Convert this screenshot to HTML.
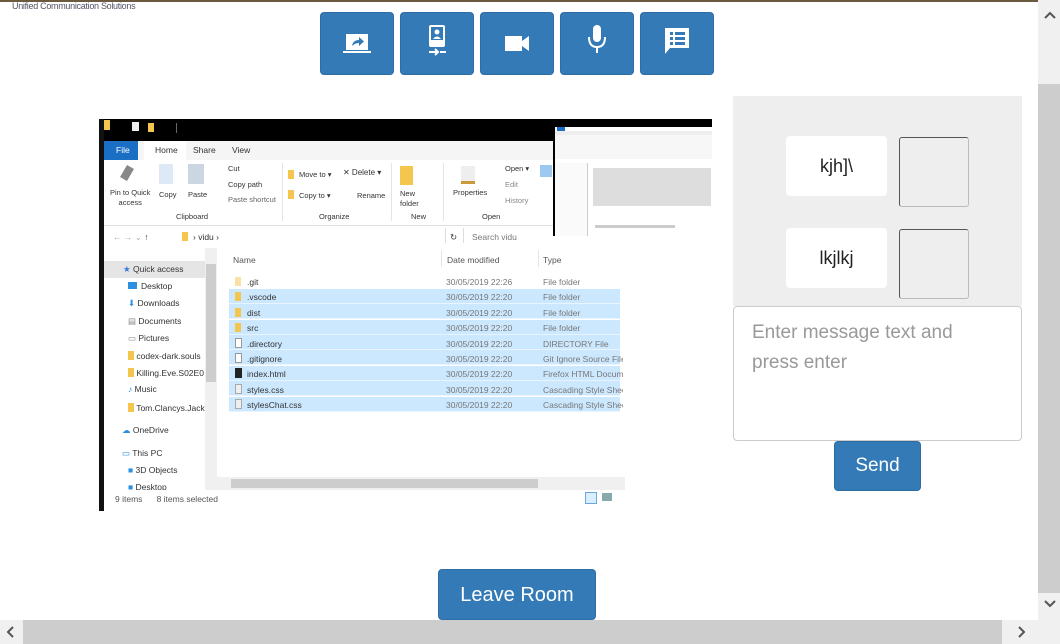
<!DOCTYPE html>
<html><head><meta charset="utf-8"><style>
*{box-sizing:border-box;margin:0;padding:0}
body{width:1060px;height:644px;overflow:hidden;background:#fff;font-family:"Liberation Sans",sans-serif;position:relative}
.a{position:absolute}
.btn{position:absolute;top:12px;width:74px;height:63px;background:#337ab7;border:1px solid #2e6da4;border-radius:4px}
.btn svg{position:absolute;left:22px;top:16px}
.t{position:absolute;font-size:8.5px;color:#333;white-space:nowrap;font-family:"Liberation Sans",sans-serif}
.row{position:absolute;left:229px;width:391px;height:15px;background:#cce8ff;border-bottom:1px solid #e8f4ff}
.fol{position:absolute;width:6px;height:9px;background:#f5c64e}
</style></head><body>
<div class="a" style="left:0;top:0;width:1038px;height:2px;background:#6b5a40"></div>
<div class="a" style="left:12px;top:1px;font-size:9px;color:#556;letter-spacing:-0.3px">Unified Communication Solutions</div>

<div class="btn" style="left:320px"><svg width="30" height="30" viewBox="0 0 30 30"><rect x="3" y="5" width="22" height="16" fill="#fff"/><rect x="0" y="22" width="28" height="2" fill="#fff"/><path d="M9 17 Q10 11 16 11 V8 L21 12.5 16 17 V14 Q12 14 9 17Z" fill="#337ab7"/></svg></div>
<div class="btn" style="left:400px"><svg width="30" height="34" viewBox="0 0 30 34" style="top:10px"><rect x="6" y="2" width="16" height="22" rx="2" fill="#fff"/><rect x="8" y="4" width="12" height="13" fill="#337ab7"/><circle cx="14" cy="9" r="2.5" fill="#fff"/><path d="M10 16 Q14 11 18 16Z" fill="#fff"/><path d="M6 29 H15 M12 26 L15 29 12 32 M17 29 H23" stroke="#fff" stroke-width="2" fill="none"/></svg></div>
<div class="btn" style="left:480px"><svg width="30" height="30" viewBox="0 0 30 30"><rect x="2" y="7" width="17" height="15" fill="#fff"/><path d="M19 12 L26 7 V22 L19 17Z" fill="#fff"/></svg></div>
<div class="btn" style="left:560px"><svg width="30" height="34" viewBox="0 0 30 34" style="top:10px"><rect x="10" y="2" width="8" height="17" rx="4" fill="#fff"/><path d="M6 14 Q6 24 14 24 Q22 24 22 14" stroke="#fff" stroke-width="2" fill="none"/><rect x="13" y="24" width="2" height="6" fill="#fff"/></svg></div>
<div class="btn" style="left:640px"><svg width="30" height="32" viewBox="0 0 30 32" style="top:13px"><path d="M2 2 H26 V22 H7 L2 28Z" fill="#fff"/><rect x="7" y="6" width="3" height="3" fill="#337ab7"/><rect x="12" y="6" width="10" height="3" fill="#337ab7"/><rect x="7" y="11" width="3" height="3" fill="#337ab7"/><rect x="12" y="11" width="10" height="3" fill="#337ab7"/><rect x="7" y="16" width="3" height="3" fill="#337ab7"/><rect x="12" y="16" width="10" height="3" fill="#337ab7"/></svg></div>

<!-- screenshot -->
<div class="a" style="left:99px;top:119px;width:454px;height:117px;background:#000"></div>
<div class="a" style="left:99px;top:119px;width:5px;height:392px;background:#111"></div>
<div class="a" style="left:104px;top:141px;width:449px;height:19px;background:#f5f5f5"></div>
<div class="a" style="left:104px;top:141px;width:34px;height:19px;background:#1a6fc4;color:#fff;font-size:8.5px;padding:4px 0 0 12px">File</div>
<div class="a" style="left:144px;top:141px;width:42px;height:19px;background:#fff"></div>
<div class="t" style="left:155px;top:145px">Home</div><div class="t" style="left:193px;top:145px">Share</div><div class="t" style="left:232px;top:145px">View</div>
<div class="a" style="left:104px;top:160px;width:449px;height:66px;background:#fff;border-bottom:1px solid #e0e0e0"></div>
<div class="a" style="left:104px;top:120px;width:6px;height:10px;background:#f5c64e"></div>
<div class="a" style="left:132px;top:122px;width:7px;height:9px;background:#eee"></div>
<div class="a" style="left:148px;top:123px;width:6px;height:9px;background:#f5c64e"></div>
<div class="a" style="left:176px;top:123px;width:1px;height:10px;background:#666"></div>
<div class="t" style="left:110px;top:188px;line-height:10px;text-align:center;font-size:7.5px">Pin to Quick<br>access</div>
<div class="a" style="left:123px;top:166px;width:8px;height:14px;background:#888;transform:rotate(30deg)"></div>
<div class="a" style="left:159px;top:164px;width:14px;height:20px;background:#dde9f5"></div>
<div class="a" style="left:188px;top:164px;width:16px;height:20px;background:#cbd6e2"></div>
<div class="t" style="left:159px;top:190px;font-size:7.5px">Copy</div><div class="t" style="left:188px;top:190px;font-size:7.5px">Paste</div>
<div class="t" style="left:228px;top:164px;font-size:7.5px">Cut</div><div class="t" style="left:228px;top:180px;font-size:7.5px">Copy path</div><div class="t" style="left:228px;top:195px;font-size:7.5px;color:#666">Paste shortcut</div>
<div class="t" style="left:176px;top:212px;font-size:7.5px">Clipboard</div>
<div class="a" style="left:282px;top:163px;width:1px;height:58px;background:#e4e4e4"></div>
<div class="fol" style="left:288px;top:170px"></div><div class="fol" style="left:288px;top:190px"></div>
<div class="t" style="left:299px;top:170px;font-size:7.5px">Move to ▾</div><div class="t" style="left:299px;top:191px;font-size:7.5px">Copy to ▾</div>
<div class="t" style="left:343px;top:168px;font-size:8px">✕ Delete ▾</div><div class="t" style="left:357px;top:191px;font-size:7.5px">Rename</div>
<div class="t" style="left:319px;top:212px;font-size:7.5px">Organize</div>
<div class="a" style="left:391px;top:163px;width:1px;height:58px;background:#e4e4e4"></div>
<div class="a" style="left:400px;top:166px;width:13px;height:19px;background:#f5c64e"></div>
<div class="t" style="left:400px;top:189px;font-size:7.5px;line-height:10px">New<br>folder</div>
<div class="t" style="left:411px;top:212px;font-size:7.5px">New</div>
<div class="a" style="left:443px;top:163px;width:1px;height:58px;background:#e4e4e4"></div>
<div class="a" style="left:461px;top:166px;width:14px;height:18px;background:#eee;border-bottom:3px solid #c89a3a"></div>
<div class="t" style="left:453px;top:188px;font-size:7.5px">Properties</div>
<div class="t" style="left:505px;top:164px;font-size:7.5px">Open ▾</div><div class="t" style="left:505px;top:180px;font-size:7.5px;color:#888">Edit</div><div class="t" style="left:505px;top:196px;font-size:7.5px;color:#888">History</div>
<div class="t" style="left:482px;top:212px;font-size:7.5px">Open</div>
<div class="a" style="left:540px;top:165px;width:12px;height:12px;background:#9cc9f0"></div>
<!-- address -->
<div class="a" style="left:104px;top:226px;width:521px;height:22px;background:#fff"></div>
<div class="t" style="left:113px;top:232px;color:#aaa">←  →  ⌄  <span style="color:#333">↑</span></div>
<div class="fol" style="left:182px;top:232px"></div>
<div class="t" style="left:193px;top:232px">›  vidu  ›</div>
<div class="a" style="left:445px;top:228px;width:1px;height:15px;background:#ddd"></div>
<div class="t" style="left:450px;top:232px">↻</div>
<div class="a" style="left:463px;top:228px;width:1px;height:15px;background:#ddd"></div>
<div class="t" style="left:472px;top:232px;color:#777">Search vidu</div>
<!-- nav pane -->
<div class="a" style="left:104px;top:248px;width:101px;height:242px;background:#fff"></div>
<div class="a" style="left:104px;top:261px;width:101px;height:17px;background:#e5e5e5"></div>
<div class="a" style="left:205px;top:248px;width:12px;height:242px;background:#f0f0f0"></div>
<div class="a" style="left:206px;top:264px;width:10px;height:118px;background:#cdcdcd"></div>
<div class="t" style="left:123px;top:264px"><span style="color:#3a7bd5">★</span> Quick access</div>
<div class="t" style="left:128px;top:281px"><span style="display:inline-block;width:9px;height:7px;background:#2d8fe0;margin-right:4px"></span>Desktop</div>
<div class="t" style="left:128px;top:298px"><span style="color:#2d8fe0">⬇</span> Downloads</div>
<div class="t" style="left:128px;top:316px"><span style="color:#888">▤</span> Documents</div>
<div class="t" style="left:128px;top:333px"><span style="color:#888">▭</span> Pictures</div>
<div class="t" style="left:128px;top:350px;width:77px;overflow:hidden"><span class="fol" style="position:relative;display:inline-block;top:1px"></span> codex-dark.souls</div>
<div class="t" style="left:128px;top:367px;width:77px;overflow:hidden"><span class="fol" style="position:relative;display:inline-block;top:1px"></span> Killing.Eve.S02E0</div>
<div class="t" style="left:128px;top:384px"><span style="color:#2d8fe0">♪</span> Music</div>
<div class="t" style="left:128px;top:402px;width:77px;overflow:hidden"><span class="fol" style="position:relative;display:inline-block;top:1px"></span> Tom.Clancys.Jack</div>
<div class="t" style="left:122px;top:425px"><span style="color:#2d8fe0">☁</span> OneDrive</div>
<div class="t" style="left:122px;top:448px"><span style="color:#2d8fe0">▭</span> This PC</div>
<div class="t" style="left:128px;top:465px"><span style="color:#2d8fe0">■</span> 3D Objects</div>
<div class="t" style="left:128px;top:482px;height:8px;overflow:hidden"><span style="color:#2d8fe0">■</span> Desktop</div>
<!-- files -->
<div class="a" style="left:217px;top:248px;width:408px;height:242px;background:#fff"></div>
<div class="t" style="left:233px;top:255px;color:#555">Name</div>
<div class="t" style="left:447px;top:255px;color:#555">Date modified</div>
<div class="t" style="left:543px;top:255px;color:#555">Type</div>
<div class="a" style="left:441px;top:250px;width:1px;height:17px;background:#e5e5e5"></div>
<div class="a" style="left:538px;top:250px;width:1px;height:17px;background:#e5e5e5"></div>
<div class="row" style="top:289px"></div><div class="row" style="top:304px"></div><div class="row" style="top:320px"></div><div class="row" style="top:335px"></div><div class="row" style="top:350px"></div><div class="row" style="top:366px"></div><div class="row" style="top:381px"></div><div class="row" style="top:397px"></div>
<div class="fol" style="left:235px;top:277px;opacity:.5"></div><div class="fol" style="left:235px;top:292px"></div><div class="fol" style="left:235px;top:308px"></div><div class="fol" style="left:235px;top:323px"></div>
<div class="a" style="left:235px;top:338px;width:7px;height:10px;border:1px solid #999;background:#fff"></div>
<div class="a" style="left:235px;top:353px;width:7px;height:10px;border:1px solid #999;background:#fff"></div>
<div class="a" style="left:235px;top:368px;width:7px;height:10px;background:#222"></div>
<div class="a" style="left:235px;top:384px;width:7px;height:10px;border:1px solid #aaa;background:#eee"></div>
<div class="a" style="left:235px;top:399px;width:7px;height:10px;border:1px solid #aaa;background:#eee"></div>
<div class="t" style="left:247px;top:277px">.git</div><div class="t" style="left:247px;top:292px">.vscode</div><div class="t" style="left:247px;top:308px">dist</div><div class="t" style="left:247px;top:323px">src</div><div class="t" style="left:247px;top:339px">.directory</div><div class="t" style="left:247px;top:354px">.gitignore</div><div class="t" style="left:247px;top:369px">index.html</div><div class="t" style="left:247px;top:385px">styles.css</div><div class="t" style="left:247px;top:400px">stylesChat.css</div>
<div class="t" style="left:446px;top:277px;color:#777">30/05/2019 22:26</div><div class="t" style="left:446px;top:292px;color:#777">30/05/2019 22:20</div><div class="t" style="left:446px;top:308px;color:#777">30/05/2019 22:20</div><div class="t" style="left:446px;top:323px;color:#777">30/05/2019 22:20</div><div class="t" style="left:446px;top:339px;color:#777">30/05/2019 22:20</div><div class="t" style="left:446px;top:354px;color:#777">30/05/2019 22:20</div><div class="t" style="left:446px;top:369px;color:#777">30/05/2019 22:20</div><div class="t" style="left:446px;top:385px;color:#777">30/05/2019 22:20</div><div class="t" style="left:446px;top:400px;color:#777">30/05/2019 22:20</div>
<div class="a" style="left:543px;top:276px;width:80px;height:140px;overflow:hidden">
<div class="t" style="left:0;top:1px;color:#777">File folder</div><div class="t" style="left:0;top:16px;color:#777">File folder</div><div class="t" style="left:0;top:32px;color:#777">File folder</div><div class="t" style="left:0;top:47px;color:#777">File folder</div><div class="t" style="left:0;top:63px;color:#777">DIRECTORY File</div><div class="t" style="left:0;top:78px;color:#777">Git Ignore Source File</div><div class="t" style="left:0;top:93px;color:#777">Firefox HTML Document</div><div class="t" style="left:0;top:109px;color:#777">Cascading Style Sheet</div><div class="t" style="left:0;top:124px;color:#777">Cascading Style Sheet</div></div>
<div class="a" style="left:217px;top:477px;width:408px;height:13px;background:#f0f0f0"></div>
<div class="a" style="left:231px;top:479px;width:307px;height:9px;background:#cdcdcd"></div>
<div class="a" style="left:104px;top:490px;width:521px;height:21px;background:#fff"></div>
<div class="t" style="left:115px;top:494px;color:#555">9 items &nbsp;&nbsp;&nbsp;&nbsp; 8 items selected</div>
<div class="a" style="left:585px;top:492px;width:12px;height:12px;border:1px solid #6aa6e0;background:#dbeeff"></div>
<div class="a" style="left:602px;top:493px;width:10px;height:8px;background:#8aa"></div>
<!-- thumbnail -->
<div class="a" style="left:553px;top:119px;width:159px;height:117px;background:#000"></div>
<div class="a" style="left:555px;top:127px;width:157px;height:109px;background:#fff"></div>
<div class="a" style="left:555px;top:131px;width:157px;height:28px;background:#f7f7f7;border-top:4px solid #eee"></div>
<div class="a" style="left:557px;top:127px;width:8px;height:4px;background:#1a6fc4"></div>
<div class="a" style="left:593px;top:168px;width:118px;height:38px;background:#ddd"></div>
<div class="a" style="left:555px;top:163px;width:33px;height:73px;background:#fafafa;border-right:1px solid #ccc"></div>
<div class="a" style="left:595px;top:225px;width:80px;height:3px;background:#ccc"></div>

<!-- chat -->
<div class="a" style="left:733px;top:96px;width:289px;height:210px;background:#eee"></div>
<div class="a" style="left:786px;top:136px;width:101px;height:60px;background:#fff;border-radius:4px;font-size:18px;text-align:center;line-height:60px;color:#222">kjh]\</div>
<div class="a" style="left:899px;top:137px;width:70px;height:70px;border:1px solid #555;border-right-color:#bbb;border-bottom-color:#bbb;border-radius:3px"></div>
<div class="a" style="left:786px;top:228px;width:101px;height:60px;background:#fff;border-radius:4px;font-size:18px;text-align:center;line-height:60px;color:#222">lkjlkj</div>
<div class="a" style="left:899px;top:229px;width:70px;height:70px;border:1px solid #555;border-right-color:#bbb;border-bottom-color:#bbb;border-radius:3px"></div>
<div class="a" style="left:733px;top:306px;width:289px;height:135px;border:1px solid #ccc;border-radius:4px;background:#fff;padding:11px 18px;font-size:19px;line-height:30px;color:#999">Enter message text and press enter</div>
<div class="a" style="left:834px;top:441px;width:87px;height:50px;background:#337ab7;border:1px solid #2e6da4;border-radius:4px;color:#fff;font-size:19px;text-align:center;line-height:48px">Send</div>
<div class="a" style="left:438px;top:569px;width:158px;height:51px;background:#337ab7;border:1px solid #2e6da4;border-radius:4px;color:#fff;font-size:20px;text-align:center;line-height:50px">Leave Room</div>

<!-- scrollbars -->
<div class="a" style="left:1038px;top:0;width:22px;height:644px;background:#f0f0f0"></div>
<div class="a" style="left:1038px;top:84px;width:22px;height:509px;background:#cdcdcd"></div>
<svg class="a" style="left:1044px;top:600px" width="12" height="9"><path d="M1 1 L6 6 11 1" stroke="#555" stroke-width="2" fill="none"/></svg>
<svg class="a" style="left:1044px;top:11px" width="12" height="9"><path d="M1 7 L6 2 11 7" stroke="#555" stroke-width="2" fill="none"/></svg>
<div class="a" style="left:0;top:620px;width:1038px;height:24px;background:#f0f0f0"></div>
<div class="a" style="left:23px;top:620px;width:979px;height:24px;background:#cdcdcd"></div>
<svg class="a" style="left:6px;top:626px" width="9" height="12"><path d="M7 1 L2 6 7 11" stroke="#555" stroke-width="2" fill="none"/></svg>
<svg class="a" style="left:1017px;top:626px" width="9" height="12"><path d="M2 1 L7 6 2 11" stroke="#555" stroke-width="2" fill="none"/></svg>
</body></html>
